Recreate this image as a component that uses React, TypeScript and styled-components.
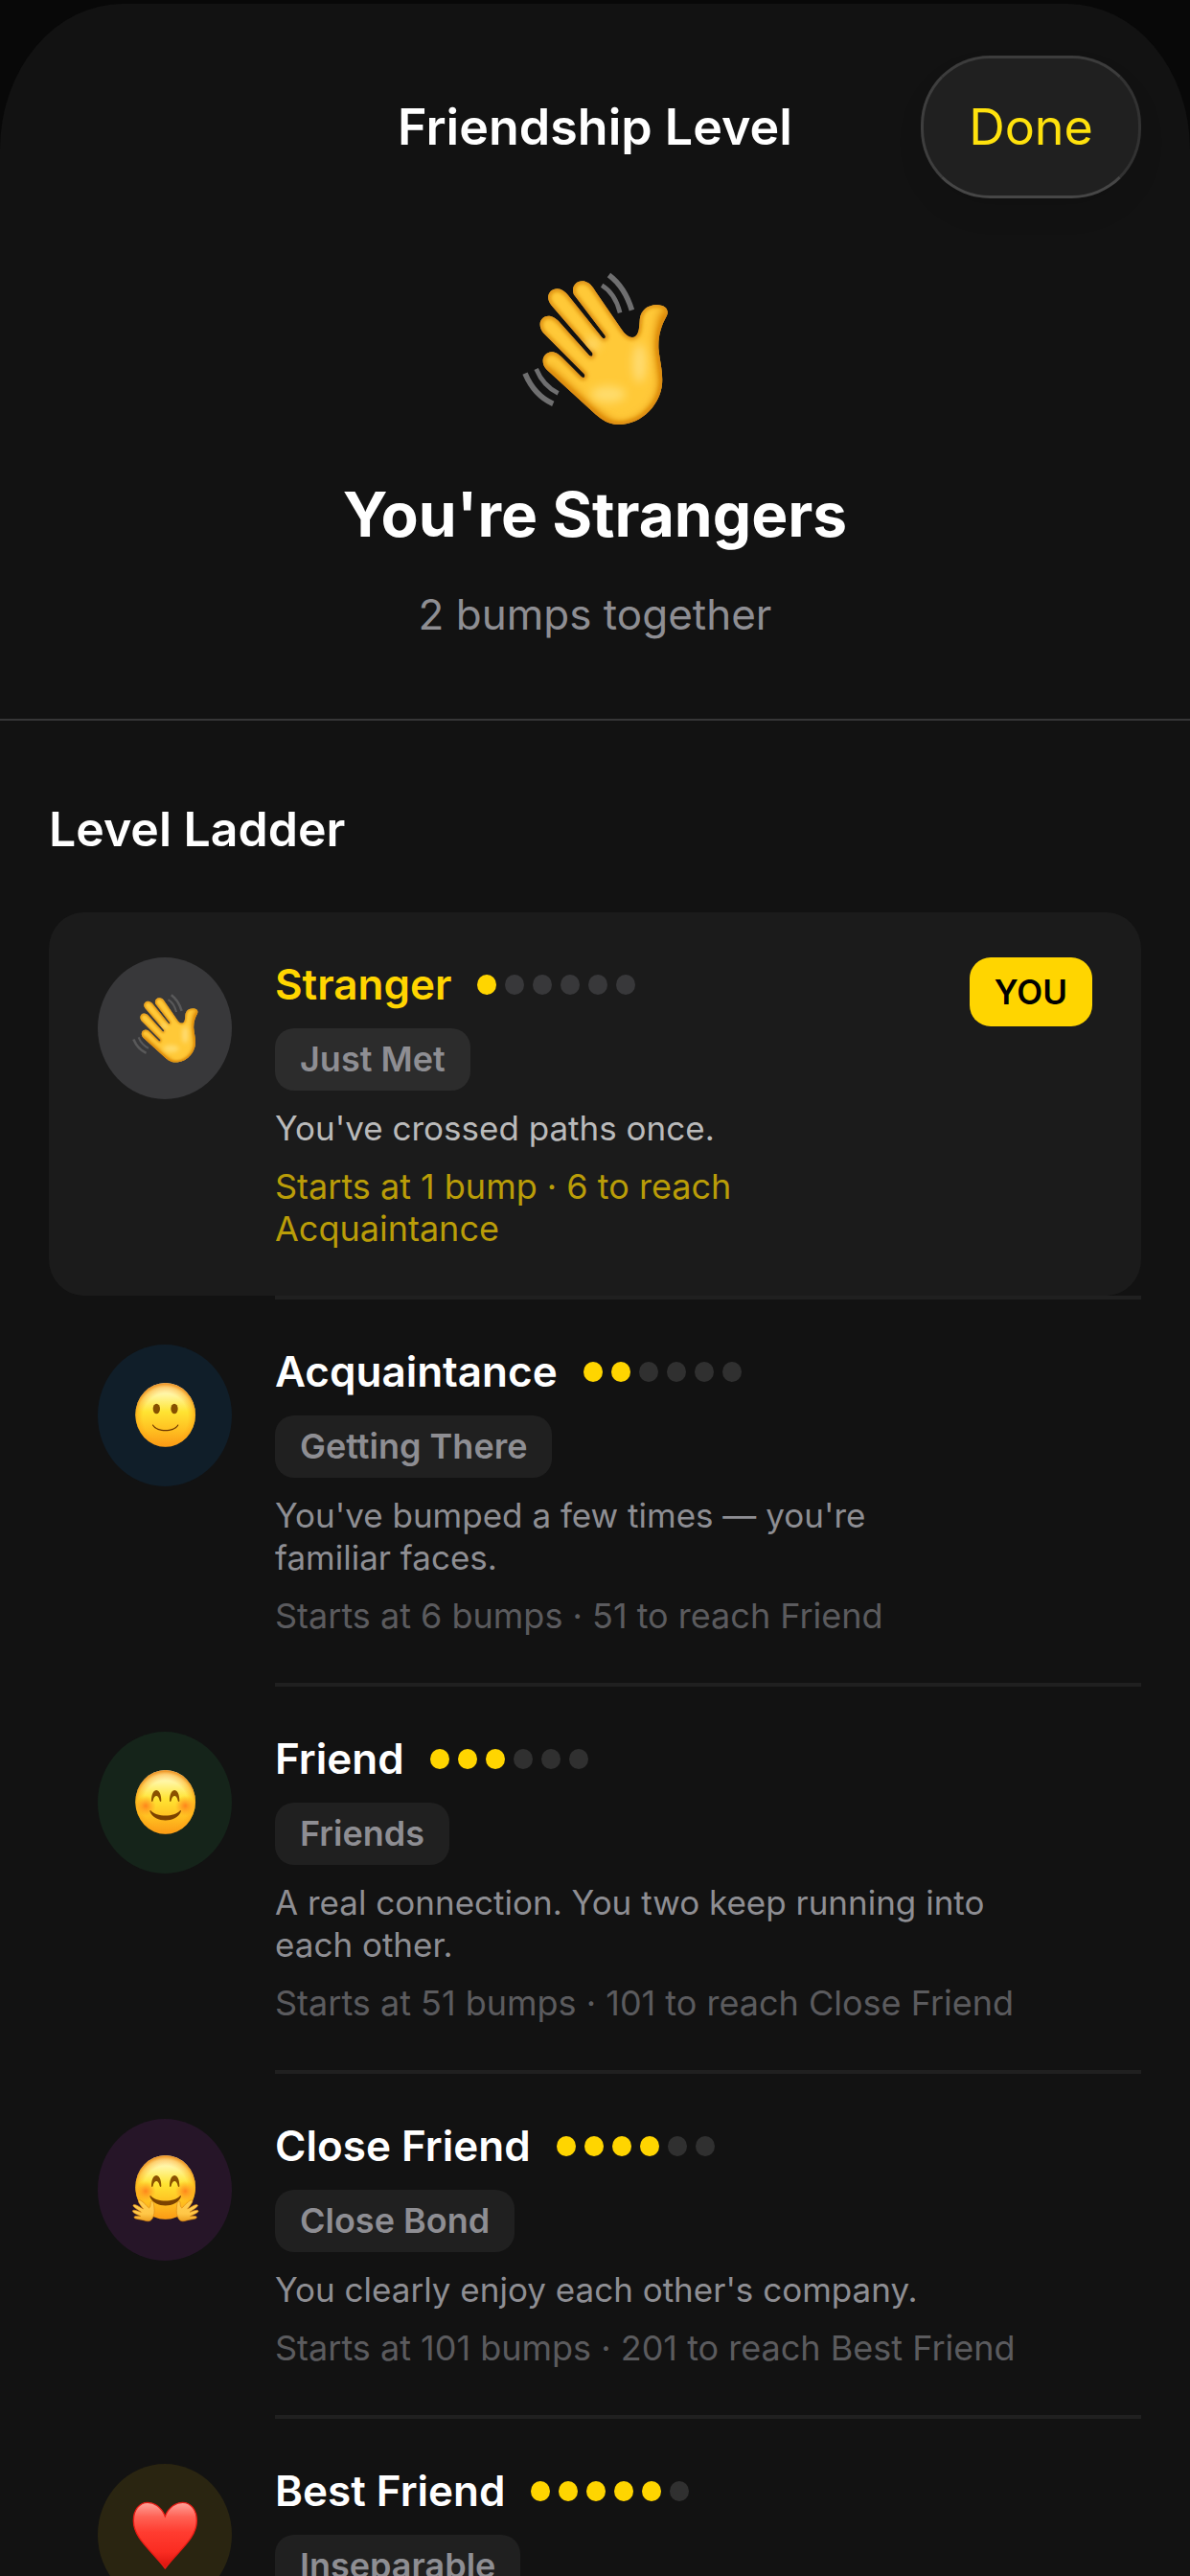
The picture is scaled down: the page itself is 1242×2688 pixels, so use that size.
import React, { useId } from "react";
import styled, { createGlobalStyle } from "styled-components";

const GlobalStyle = createGlobalStyle`
  *, *::before, *::after { box-sizing: border-box; }
  html, body { margin: 0; background: #080808; }
  body { font-family: Inter, "Liberation Sans", sans-serif; color: #fff; }
  h1, h2, h3, p, ol { margin: 0; padding: 0; }
`;

const Backdrop = styled.div`
  height: 100vh;
  padding-top: 4px;
  background: #080808;
  overflow: hidden;
`;

const Sheet = styled.main`
  height: 100%;
  display: flex;
  flex-direction: column;
  background: #121212;
  border-radius: 128px 128px 0 0 / 152px 152px 0 0;
  overflow: hidden;
`;

const Header = styled.header`
  flex: none;
  display: grid;
  grid-template-columns: 1fr auto 1fr;
  align-items: center;
  padding: 54px 51px 0;
`;

const HeaderTitle = styled.h1`
  grid-column: 2;
  font-size: 52px;
  line-height: 64px;
  font-weight: 600;
`;

const DoneButton = styled.button`
  justify-self: end;
  width: 230px;
  height: 149px;
  padding: 0;
  border: 3px solid #3a3a3a;
  border-color: #3c3c3c #323232 #464646 #3e3e3e;
  border-radius: 72px;
  background: #202020;
  box-shadow: 0 16px 28px rgba(0, 0, 0, 0.08);
  color: #ffe20d;
  font: 400 52px/64px Inter, "Liberation Sans", sans-serif;
  cursor: pointer;
`;

const Body = styled.div`
  flex: 1;
  min-height: 0;
  overflow-y: auto;
  scrollbar-width: none;
`;

const Hero = styled.section`
  display: flex;
  flex-direction: column;
  align-items: center;
  padding: 77px 51px 80px;
  border-bottom: 2px solid #363637;
`;

const HeroTitle = styled.h2`
  margin-top: 51px;
  font-size: 64px;
  line-height: 84px;
  font-weight: 700;
`;

const HeroCaption = styled.p`
  margin-top: 34px;
  margin-bottom: 1px;
  font-size: 44px;
  line-height: 56px;
  color: #8e8e93;
`;

const Ladder = styled.section`
  padding: 81px 51px 0;
`;

const LadderTitle = styled.h2`
  font-size: 50px;
  line-height: 64px;
  font-weight: 600;
`;

const LevelList = styled.ol`
  margin-top: 55px;
  list-style: none;
`;

const LevelItem = styled.li`
  &::after {
    content: "";
    display: block;
    height: 4px;
    margin-left: 236px;
    background: #202020;
  }
`;

const LevelRow = styled.article<{ $current?: boolean }>`
  display: flex;
  align-items: flex-start;
  gap: 45px;
  padding: 47px 51px 48px;
  border-radius: 36px / 38px;
  background: ${(p) => (p.$current ? "#1b1b1b" : "transparent")};
`;

const Avatar = styled.div<{ $tint: string }>`
  flex: none;
  display: grid;
  place-items: center;
  width: 140px;
  height: 148px;
  border-radius: 50%;
  background: ${(p) => p.$tint};
`;

const Details = styled.div`
  flex: 1;
  min-width: 0;
  display: flex;
  flex-direction: column;
  align-items: flex-start;
  gap: 17px;
`;

const NameLine = styled.div`
  display: flex;
  align-items: center;
  gap: 27px;
  height: 57px;
`;

const Name = styled.h3<{ $current?: boolean }>`
  font-size: 44px;
  line-height: 57px;
  font-weight: 600;
  color: ${(p) => (p.$current ? "#ffd500" : "#fff")};
`;

const Dots = styled.div`
  display: flex;
  gap: 9px;
`;

const Dot = styled.span<{ $on: boolean; $current?: boolean }>`
  width: 20px;
  height: 21px;
  border-radius: 50%;
  background: ${(p) => (p.$on ? "#ffd500" : p.$current ? "#38383a" : "#303030")};
`;

const Chip = styled.span<{ $current?: boolean }>`
  height: 65px;
  padding: 0 26px;
  border-radius: 20px;
  background: ${(p) => (p.$current ? "#2c2c2c" : "#202020")};
  color: #8e8e93;
  font-size: 36px;
  line-height: 65px;
  font-weight: 600;
`;

const Description = styled.p<{ $current?: boolean }>`
  font-size: 35px;
  line-height: 44px;
  white-space: pre-line;
  color: ${(p) => (p.$current ? "#bababa" : "#8e8e93")};
`;

const Range = styled.p<{ $current?: boolean }>`
  font-size: 36px;
  line-height: 44px;
  white-space: pre-line;
  color: ${(p) => (p.$current ? "#ba9d08" : "#5b5b5e")};
`;

const YouBadge = styled.span`
  flex: none;
  height: 72px;
  padding: 0 26px;
  border-radius: 22px;
  background: #ffd500;
  color: #000;
  font-size: 35px;
  line-height: 72px;
  font-weight: 600;
`;

const HAND =
  "M292 170C280 140 310 116 338 134C346 139 352 148 360 160L440 276C458 304 475 308 486 300C498 290 497 270 499 248C502 218 524 203 552 202C578 203 592 216 584 236C566 268 556 300 558 340C562 380 572 410 569 450C564 510 510 576 432 577C400 577 380 562 360 545L208 406C184 382 196 352 222 350C236 350 246 358 256 368L316 428C324 434 330 426 324 418L196 290C176 264 188 238 212 237C226 237 236 245 244 253L340 360C348 368 354 360 350 352L222 204C200 178 216 152 240 152C254 152 264 161 274 172L380 304C388 312 394 306 390 298Z";

function WavingHand({ width, height, lines }: { width: number; height: number; lines: string }) {
  const id = useId();
  return (
    <svg width={width} height={height} viewBox="130 100 460 480" preserveAspectRatio="none" aria-hidden="true">
      <defs>
        <clipPath id={`${id}c`}>
          <path d={HAND} />
        </clipPath>
        <filter id={`${id}s`} x="-20%" y="-20%" width="140%" height="140%">
          <feGaussianBlur stdDeviation="7" />
        </filter>
        <filter id={`${id}b`} x="-60%" y="-60%" width="220%" height="220%">
          <feGaussianBlur stdDeviation="15" />
        </filter>
      </defs>
      <path d={HAND} fill="#ffc938" />
      <g clipPath={`url(#${id}c)`}>
        <path
          d="M584 220C552 290 562 350 576 440C574 520 510 590 432 588C390 586 330 520 200 404"
          fill="none"
          stroke="#d98000"
          strokeWidth="30"
          filter={`url(#${id}b)`}
        />
        <path d={HAND} fill="none" stroke="#d8860a" strokeWidth="14" filter={`url(#${id}s)`} />
        <ellipse cx="498" cy="385" rx="22" ry="60" fill="#ffdb70" filter={`url(#${id}b)`} />
        <ellipse cx="400" cy="482" rx="54" ry="26" fill="#ffdc6c" filter={`url(#${id}b)`} />
        <ellipse cx="350" cy="325" rx="24" ry="20" fill="#ffd765" filter={`url(#${id}b)`} />
      </g>
      <g fill="none" stroke={lines}>
        <path d="M402 109Q452 146 474 219" strokeWidth="17" />
        <path d="M380 141Q422 166 437 227" strokeWidth="14" />
        <path d="M139 417Q168 486 227 512" strokeWidth="17" />
        <path d="M174 403Q196 456 243 479" strokeWidth="14" />
      </g>
    </svg>
  );
}

function Face({ mood }: { mood: "slight" | "smile" | "hug" }) {
  const id = useId();
  const cy = mood === "hug" ? 214 : 220;
  return (
    <svg width="140" height="148" viewBox="0 0 420 444" preserveAspectRatio="none" aria-hidden="true">
      <defs>
        <linearGradient id={`${id}f`} x1="0" y1="0" x2="0" y2="1">
          <stop offset="0" stopColor="#fffce0" />
          <stop offset="0.2" stopColor="#fff59c" />
          <stop offset="0.45" stopColor="#ffe433" />
          <stop offset="0.75" stopColor="#ffbe20" />
          <stop offset="1" stopColor="#fb9a16" />
        </linearGradient>
        <radialGradient id={`${id}r`} cx="0.5" cy="0.54" r="0.52">
          <stop offset="0.72" stopColor="#ffa012" stopOpacity="0" />
          <stop offset="0.9" stopColor="#fb9f12" stopOpacity="0.45" />
          <stop offset="1" stopColor="#ec8a10" stopOpacity="0.85" />
        </radialGradient>
        <radialGradient id={`${id}k`}>
          <stop offset="0" stopColor="#ff6a16" stopOpacity="0.75" />
          <stop offset="1" stopColor="#ff7a1a" stopOpacity="0" />
        </radialGradient>
        <linearGradient id={`${id}h`} x1="0" y1="0" x2="0" y2="1">
          <stop offset="0" stopColor="#ffce52" />
          <stop offset="0.65" stopColor="#ffc747" />
          <stop offset="1" stopColor="#eda022" />
        </linearGradient>
      </defs>
      <g transform={`translate(212 ${cy})`}>
        <ellipse rx="94" ry="100" fill={`url(#${id}f)`} />
        <ellipse rx="94" ry="100" fill={`url(#${id}r)`} />
        {mood === "slight" ? (
          <>
            <ellipse cx="-28" cy="-19" rx="11" ry="16" fill="#865000" />
            <ellipse cx="28" cy="-19" rx="11" ry="16" fill="#865000" />
            <path d="M-38 31C-26 52 26 52 38 31C40 29 42 31 40 34C26 56 -26 56 -40 34C-42 31 -40 29 -38 31Z" fill="#6a3500" />
          </>
        ) : (
          <>
            <circle cx="-62" cy="12" r="32" fill={`url(#${id}k)`} />
            <circle cx="62" cy="12" r="32" fill={`url(#${id}k)`} />
            <path d="M-44 -4C-44 -48 -13 -48 -13 -4C-13 0 -17 0 -18 -4C-22 -24 -35 -24 -39 -4C-40 0 -44 0 -44 -4Z" fill="#8a5200" />
            <path d="M44 -4C44 -48 13 -48 13 -4C13 0 17 0 18 -4C22 -24 35 -24 39 -4C40 0 44 0 44 -4Z" fill="#8a5200" />
            <path d="M-46 27C-28 48 28 48 46 27C48 25 50 28 48 31C34 66 -34 66 -48 31C-50 28 -48 25 -46 27Z" fill="#7c4200" />
          </>
        )}
      </g>
      {mood === "hug" &&
        [1, -1].map((side) => (
          <g key={side} transform={side === 1 ? undefined : "translate(424 0) scale(-1 1)"}>
            <path
              d="M146 318C134 314 114 314 114 308C114 303 126 304 135 305C126 300 108 294 109 288C111 282 128 290 136 292C128 286 108 275 111 270C115 264 132 276 143 282C136 273 124 259 128 255C133 251 148 266 157 276C163 284 166 272 166 261C168 254 175 258 176 270C177 282 179 292 174 306C168 322 158 322 146 318Z"
              fill={`url(#${id}h)`}
              stroke="#e08a12"
              strokeWidth="2"
            />
          </g>
        ))}
    </svg>
  );
}

function Heart() {
  const id = useId();
  return (
    <svg width="140" height="148" viewBox="0 0 420 444" preserveAspectRatio="none" aria-hidden="true">
      <defs>
        <linearGradient id={`${id}g`} x1="0" y1="0" x2="0" y2="1">
          <stop offset="0" stopColor="#ffa59b" />
          <stop offset="0.22" stopColor="#ff6154" />
          <stop offset="0.45" stopColor="#ff3c30" />
          <stop offset="0.75" stopColor="#fa2c22" />
          <stop offset="1" stopColor="#d9120d" />
        </linearGradient>
      </defs>
      <path
        d="M211 164C199 134 176 121 156 121C130 121 112 145 112 178C112 234 168 270 211 327C254 270 310 234 310 178C310 145 292 121 266 121C246 121 223 134 211 164Z"
        fill={`url(#${id}g)`}
        stroke="#e81b14"
        strokeWidth="4"
      />
    </svg>
  );
}

type Level = {
  name: string;
  chip: string;
  text?: string;
  range?: string;
  tint: string;
  icon: React.ReactNode;
  current?: boolean;
};

const LEVELS: Level[] = [
  {
    name: "Stranger",
    chip: "Just Met",
    text: "You've crossed paths once.",
    range: "Starts at 1 bump · 6 to reach\nAcquaintance",
    tint: "#38383a",
    icon: <WavingHand width={69} height={72} lines="#59595a" />,
    current: true,
  },
  {
    name: "Acquaintance",
    chip: "Getting There",
    text: "You've bumped a few times — you're\nfamiliar faces.",
    range: "Starts at 6 bumps · 51 to reach Friend",
    tint: "#101e29",
    icon: <Face mood="slight" />,
  },
  {
    name: "Friend",
    chip: "Friends",
    text: "A real connection. You two keep running into\neach other.",
    range: "Starts at 51 bumps · 101 to reach Close Friend",
    tint: "#15241a",
    icon: <Face mood="smile" />,
  },
  {
    name: "Close Friend",
    chip: "Close Bond",
    text: "You clearly enjoy each other's company.",
    range: "Starts at 101 bumps · 201 to reach Best Friend",
    tint: "#261528",
    icon: <Face mood="hug" />,
  },
  {
    name: "Best Friend",
    chip: "Inseparable",
    tint: "#2a2511",
    icon: <Heart />,
  },
];

const STEPS = [1, 2, 3, 4, 5, 6];

function LevelEntry({ level, rank }: { level: Level; rank: number }) {
  const { current } = level;
  return (
    <LevelItem>
      <LevelRow $current={current}>
        <Avatar $tint={level.tint}>{level.icon}</Avatar>
        <Details>
          <NameLine>
            <Name $current={current}>{level.name}</Name>
            <Dots role="img" aria-label={`${rank} / 6`}>
              {STEPS.map((s) => (
                <Dot key={s} $on={s <= rank} $current={current} />
              ))}
            </Dots>
          </NameLine>
          <Chip $current={current}>{level.chip}</Chip>
          {level.text && <Description $current={current}>{level.text}</Description>}
          {level.range && <Range $current={current}>{level.range}</Range>}
        </Details>
        {current && <YouBadge>YOU</YouBadge>}
      </LevelRow>
    </LevelItem>
  );
}

export default function App() {
  return (
    <>
      <GlobalStyle />
      <Backdrop>
        <Sheet>
          <Header>
            <HeaderTitle>Friendship Level</HeaderTitle>
            <DoneButton type="button">Done</DoneButton>
          </Header>
          <Body>
            <Hero>
              <WavingHand width={153} height={160} lines="#6f6f70" />
              <HeroTitle>You're Strangers</HeroTitle>
              <HeroCaption>2 bumps together</HeroCaption>
            </Hero>
            <Ladder>
              <LadderTitle>Level Ladder</LadderTitle>
              <LevelList>
                {LEVELS.map((level, i) => (
                  <LevelEntry key={level.name} level={level} rank={i + 1} />
                ))}
              </LevelList>
            </Ladder>
          </Body>
        </Sheet>
      </Backdrop>
    </>
  );
}
